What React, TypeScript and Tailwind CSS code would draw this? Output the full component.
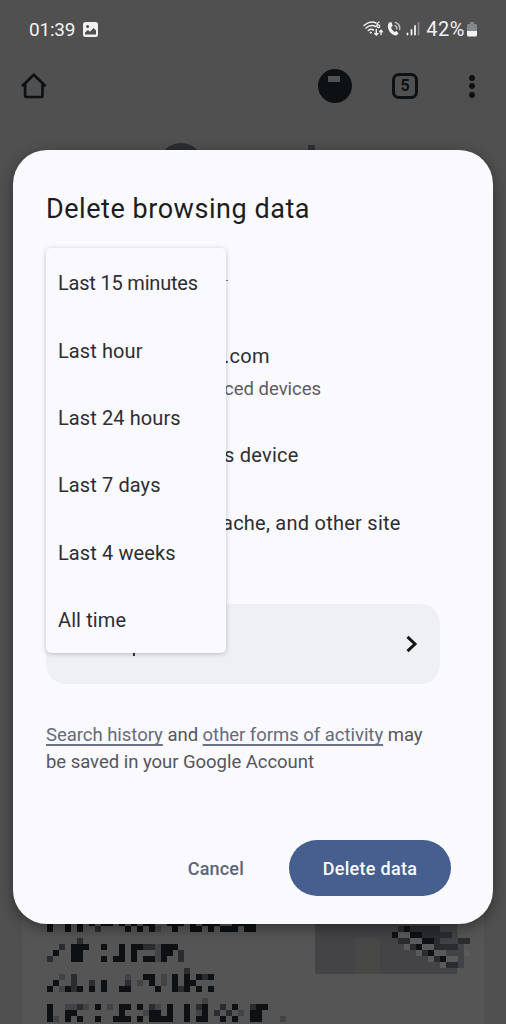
import React from 'react';

const ranges = ['Last 15 minutes', 'Last hour', 'Last 24 hours', 'Last 7 days', 'Last 4 weeks', 'All time'];

// '#' solid, 'x' medium, 'o' faint, 'l' light
const textRows = [
  '#..#.#..x....#.#.#o..#..##.#.###.##',
  '',
  '.....x',
  '..x.###..#..#.##xxo###',
  '.#..##......#.#...o##.x',
  'x...##...#.##.#.##o#..x',
];

const middleRows = [
  '.......................x',
  '..o.x........o..##.o.#.#.#x#',
  '.#..x..x.#...x.o.#.o.#.##',
  '#.o#x#.#.#..##....#..#x#.#.#',
];

const lowerRows = [
  '..........................o',
  '#..ooxo.#.o.##.#.xo.#..#.x#..x.#..x##',
  '#..##.......#...o##.#..#.o#.x.x.o.##',
  '#o.#.#..#..###.#.####..#.##..#.#..##...o',
];

const photoRows = [
  '.x#xxxxxoo',
  '#ll##xxxxxo',
  '.xxll##xoooxx',
  '..lx#llxxxxo',
  '....lx#lloool',
  '......lx#llo',
  '........lxxo',
];

const shades: Record<string, string> = { '#': '#0d1113', x: '#2b2c30', o: '#424346', l: '#5a5a5a' };

const Mosaic = ({ rows, x, y }: { rows: string[]; x: number; y: number }) => (
  <g transform={`translate(${x} ${y})`}>
    {rows.map((row, r) =>
      row.split('').map((cell, c) =>
        shades[cell] ? (
          <rect key={`${r}-${c}`} x={c * 5.96} y={r * 5.96} width="6" height="6" fill={shades[cell]} />
        ) : null
      )
    )}
  </g>
);

const StatusBar = () => (
  <div className="flex h-[58px] items-center justify-between pl-[29px] pr-[29px] text-[#f1f1f4]">
    <div className="flex items-center gap-2">
      <span className="text-[19px] leading-none tracking-[-0.2px]">01:39</span>
      <svg className="h-[15px] w-[15px]" viewBox="0 0 15 15">
        <rect width="15" height="15" rx="2.5" fill="#f1f1f4" />
        <circle cx="4.6" cy="4.6" r="1.5" fill="#505050" />
        <path d="M2 12.5 L2 10.5 L5 8 L7 9.7 L10.5 6 L13 8.5 V12.5 Z" fill="#505050" />
      </svg>
    </div>
    <div className="flex items-center">
      <svg className="mr-[1.5px] h-5 w-[62px]" viewBox="0 0 62 20" fill="none" stroke="#f1f1f4" strokeLinecap="round">
        <path d="M1 6.5 Q7 1.3 13 4 M3 9 Q8 5 12.5 7.5 M5.3 11.5 Q8 9.5 10.5 11" strokeWidth="1.5" />
        <circle cx="7.8" cy="13.6" r="0.7" fill="#f1f1f4" />
        <path d="M16 3 Q13.7 4.3 13.8 6.8" strokeWidth="1.3" />
        <circle cx="15.4" cy="7.3" r="1.4" strokeWidth="1.2" />
        <path d="M13.3 10.5 V16 M11.7 14.5 L13.3 16 L14.9 14.5 M18 15.5 V11.5 M16.6 12.8 L18 11.3 L19.4 12.8" strokeWidth="1.4" />
        <path
          d="M26 3.5 L28.5 3.2 L29.7 7 L28 8.5 Q29 11.5 31.5 13 L33.5 12 L35.5 14.5 L33.5 16.5 Q29.5 16.5 26.5 12.5 Q23.5 8 26 3.5 Z"
          fill="#f1f1f4"
          stroke="none"
        />
        <path d="M32.2 6.7 Q34 7.7 33.8 9.8 M32.5 3.5 Q37.3 5 36.6 10.5" stroke="#b9babd" strokeWidth="1.6" />
        <path d="M44.5 15.5 V14.5 M48.5 15.5 V11 M52 15.5 V7" strokeWidth="1.8" />
        <path d="M55.5 15.5 V4" stroke="#85878c" strokeWidth="1.8" />
      </svg>
      <span className="text-[20px] leading-none tracking-[0.5px]">42%</span>
      <svg className="ml-[2px] h-[15px] w-[10px]" viewBox="0 0 10 15">
        <path d="M3 0 H7 V2 H8.5 Q10 2 10 3.5 V9 H0 V3.5 Q0 2 1.5 2 H3 Z" fill="#85878f" />
        <path d="M0 9 H10 V13 Q10 14.5 8.5 14.5 H1.5 Q0 14.5 0 13 Z" fill="#f1f1f4" />
      </svg>
    </div>
  </div>
);

const Toolbar = () => (
  <div className="flex h-14 items-center pl-[21px] pr-[31px]">
    <svg className="h-[26px] w-[26px]" viewBox="0 0 26 26" fill="none" stroke="#0d1113" strokeWidth="2.7" strokeLinejoin="round">
      <path d="M1 13.2 L12.8 1.7 L24.6 13.2 M4.1 11 V22.5 Q4.1 24 5.6 24 H20 Q21.5 24 21.5 22.5 V11" />
    </svg>
    <div className="ml-auto flex h-[34px] w-[34px] justify-center rounded-full bg-[#0d1113] pt-[7px]">
      <span className="mr-[3px] h-[6px] w-3 bg-[#505254]" />
    </div>
    <div className="ml-10 flex h-[26px] w-[26px] items-center justify-center rounded-[7px] border-3 border-[#0d1113] text-[16px] font-bold leading-none text-[#0d1113]">
      5
    </div>
    <div className="ml-[51px] flex flex-col gap-[2.5px]">
      <span className="h-[6px] w-[6px] rounded-full bg-[#0d1113]" />
      <span className="h-[6px] w-[6px] rounded-full bg-[#0d1113]" />
      <span className="h-[6px] w-[6px] rounded-full bg-[#0d1113]" />
    </div>
  </div>
);

const Backdrop = () => (
  <svg className="absolute inset-0 h-[1024px] w-[506px]" viewBox="0 0 506 1024" shapeRendering="crispEdges">
    <circle cx="181" cy="166" r="23" fill="#2c2d31" shapeRendering="auto" />
    <rect x="308" y="145" width="7" height="8" fill="#303136" />
    <rect x="22" y="880" width="462" height="144" fill="#555555" />
    <rect x="315" y="900" width="142" height="74" fill="#444446" />
    <rect x="354" y="938" width="26" height="36" fill="#484847" />
    <Mosaic rows={['#..#.#.#.##.#.#.##..###.#.###..####']} x={47.3} y={920.3} />
    <Mosaic rows={textRows} x={47.3} y={926.3} />
    <Mosaic rows={middleRows} x={47.3} y={968} />
    <Mosaic rows={lowerRows} x={47.3} y={997.8} />
    <Mosaic rows={photoRows} x={392} y={926.3} />
  </svg>
);

const TimeRangeMenu = () => (
  <ul className="absolute left-[33px] top-[98px] flex h-[405px] w-[180px] flex-col rounded-[5px] bg-[#faf9fe] shadow-[0_1px_5px_rgba(40,50,60,0.28)]">
    {ranges.map((range, i) => (
      <li
        key={range}
        className={`flex h-[67.4px] items-center whitespace-nowrap pl-3 pt-[3px] text-[20px] leading-6 text-[#2d2e32] ${
          i === 0 ? 'tracking-[-0.2px]' : 'tracking-[0.1px]'
        }`}
      >
        {range}
      </li>
    ))}
  </ul>
);

const DeleteDialog = () => (
  <div className="absolute left-[13px] top-[150px] flex h-[774px] w-[480px] flex-col rounded-[34px] bg-[#faf9fe] px-[33px] text-[#2d2e32] shadow-[0_4px_14px_rgba(0,0,0,0.4)]">
    <h1 className="mt-[41px] text-[27px] leading-9 tracking-[0.54px] text-[#1c1d20]">Delete browsing data</h1>
    <div className="mt-[117px] flex flex-col pl-[178px] text-[20px] leading-6 tracking-[0.25px]">
      <span>.com</span>
      <span className="mt-[9px] text-[18.5px] tracking-normal text-[#5b5c60]">ced devices</span>
      <span className="mt-[42px]">s device</span>
      <span className="-ml-0.5 mt-11 whitespace-nowrap">ache, and other site</span>
    </div>
    <div className="mt-[69px] flex h-20 w-[394px] items-center justify-end rounded-[20px] bg-[#eff0f4] pr-[22px]">
      <svg className="h-[18px] w-3" viewBox="0 0 12 18" fill="none" stroke="#151618" strokeWidth="3">
        <path d="M1.5 1.8 L9 9 L1.5 16.2" />
      </svg>
    </div>
    <p className="mt-[38px] whitespace-nowrap text-[18.5px] leading-[27px] tracking-[-0.03px] text-[#55565b]">
      <a href="#" className="text-[#666b7a] underline decoration-[#68728a] decoration-[1.5px] underline-offset-[3px] [text-decoration-skip-ink:none]">
        Search history
      </a>{' '}
      and{' '}
      <a href="#" className="text-[#666b7a] underline decoration-[#68728a] decoration-[1.5px] underline-offset-[3px] [text-decoration-skip-ink:none]">
        other forms of activity
      </a>{' '}
      may
      <br />
      be saved in your Google Account
    </p>
    <div className="mt-auto mb-7 flex items-center justify-end pr-[9px] text-[18px] font-medium">
      <button className="mr-[45px] tracking-[0.2px] text-[#5b6579]">Cancel</button>
      <button className="h-14 w-[162px] rounded-full bg-[#465f8f] tracking-[0.3px] text-[#faf9fe]">Delete data</button>
    </div>
    {/* edges of the rows the menu covers */}
    <span className="absolute left-[212px] top-[130px] h-px w-[3px] bg-[#77787c]" />
    <span className="absolute left-[120px] top-[502px] h-[4px] w-[2px] bg-[#2d2e32]" />
    <TimeRangeMenu />
  </div>
);

const App = () => {
  return (
    <div className="relative h-[1024px] w-[506px] overflow-hidden bg-[#505050] font-[Roboto,sans-serif]">
      <Backdrop />
      <StatusBar />
      <Toolbar />
      <DeleteDialog />
    </div>
  );
};

export default App;
